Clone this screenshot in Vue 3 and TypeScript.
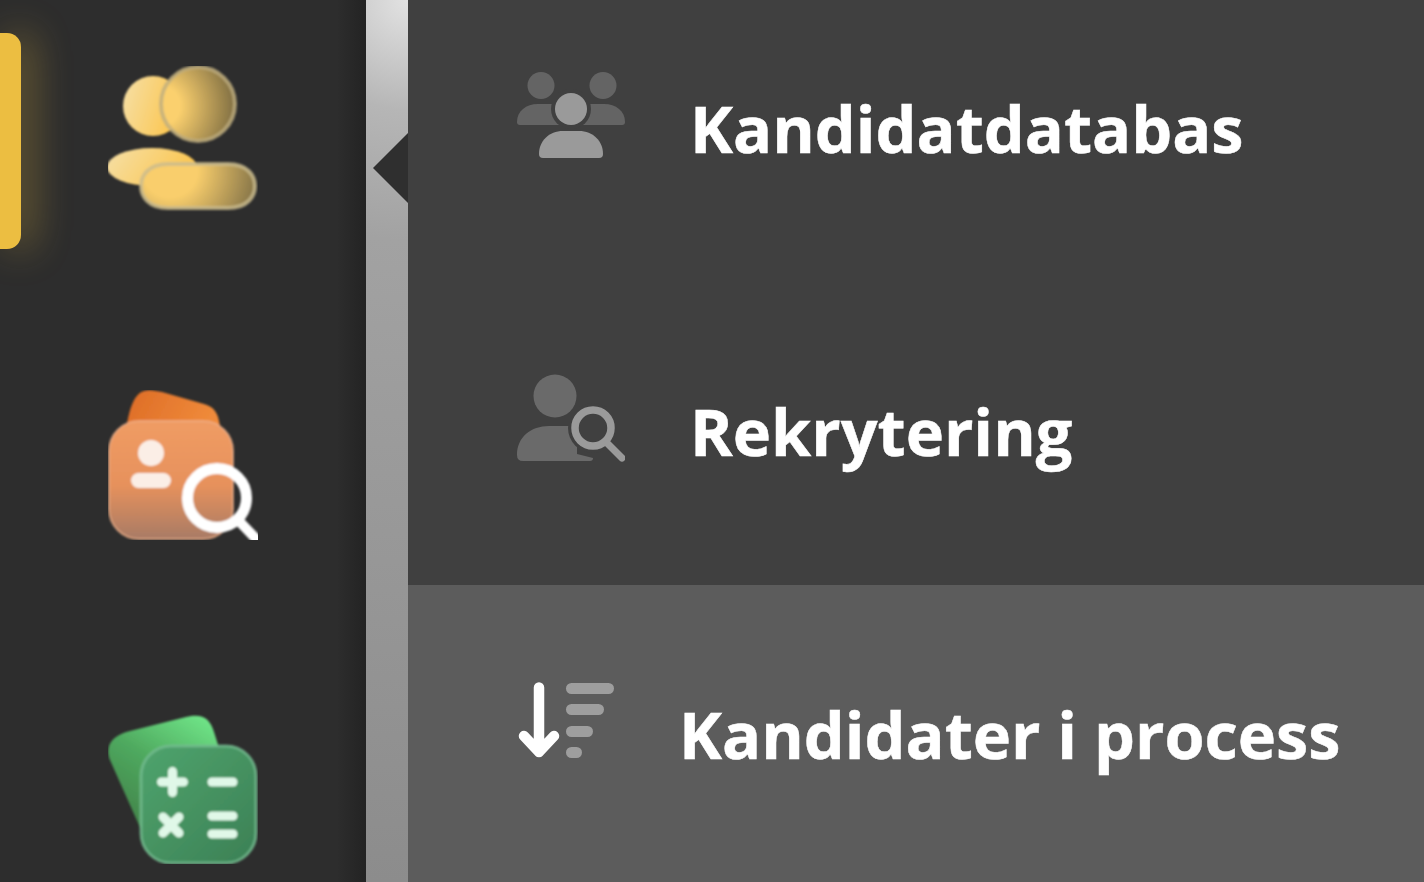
<template>
  <div class="shell">
    <aside class="rail">
      <span class="rail__marker"></span>

      <svg class="rail__icon" width="150" height="150" viewBox="0 0 150 150">
        <defs>
          <linearGradient id="coinBack" x1="0" y1="0" x2="1" y2="0.3">
            <stop offset="0" stop-color="#f6e0a8" />
            <stop offset="1" stop-color="#fbc650" />
          </linearGradient>
          <radialGradient id="coinFront" gradientUnits="userSpaceOnUse" cx="52" cy="40" r="80">
            <stop offset="0.25" stop-color="#fbd06e" />
            <stop offset="1" stop-color="#75663f" />
          </radialGradient>
          <radialGradient id="bodyFront" gradientUnits="userSpaceOnUse" cx="62" cy="104" r="92">
            <stop offset="0.3" stop-color="#f9ce6c" />
            <stop offset="1" stop-color="#7d6e46" />
          </radialGradient>
          <filter id="soft"><feGaussianBlur stdDeviation="1.2" /></filter>
        </defs>
        <g filter="url(#soft)">
          <circle cx="45" cy="40" r="30" fill="url(#coinBack)" />
          <ellipse cx="44" cy="101" rx="45" ry="19" fill="url(#coinBack)" />
          <circle cx="90" cy="38" r="37" fill="url(#coinFront)" stroke="#bfae7e" stroke-opacity="0.8" stroke-width="4" />
          <path d="M60 98 H120 C140 98 147 110 147 120 C147 130 140 142 120 142 H60 C40 142 33 130 33 120 C33 110 40 98 60 98 Z" fill="url(#bodyFront)" stroke="#cbbb8d" stroke-opacity="0.8" stroke-width="4" />
        </g>
      </svg>

      <svg class="rail__icon" width="150" height="150" viewBox="0 0 150 150">
        <defs>
          <linearGradient id="cardBack" x1="0" y1="0" x2="1" y2="0.2">
            <stop offset="0" stop-color="#dd6c26" />
            <stop offset="1" stop-color="#ef8a3a" />
          </linearGradient>
          <linearGradient id="cardFront" x1="0" y1="0" x2="0" y2="1">
            <stop offset="0" stop-color="#f09c64" />
            <stop offset="0.55" stop-color="#e6915c" />
            <stop offset="1" stop-color="#a87b66" />
          </linearGradient>
        </defs>
        <g filter="url(#soft)">
          <path d="M19 34 C22 18 26 4 36 1 C42 -1 48 1 54 2 L96 14 C106 17 110 22 112 36 Z" fill="url(#cardBack)" />
          <rect x="1" y="31" width="124" height="118" rx="30" fill="url(#cardFront)" stroke="#f0b08a" stroke-opacity="0.7" stroke-width="2" />
          <circle cx="43" cy="63" r="13" fill="#fbeee6" />
          <rect x="23" y="83" width="40" height="15" rx="7.500" fill="#fbeee6" />
          <circle cx="109" cy="108" r="29.500" fill="none" stroke="#fff" stroke-width="11" />
          <path d="M130 130 L150 151" stroke="#fff" stroke-width="10" stroke-linecap="round" />
        </g>
      </svg>

      <svg class="rail__icon" width="150" height="150" viewBox="0 0 150 150">
        <defs>
          <linearGradient id="calcBack" x1="0.8" y1="0" x2="0.2" y2="1">
            <stop offset="0" stop-color="#6fe487" />
            <stop offset="0.45" stop-color="#4fa95f" />
            <stop offset="1" stop-color="#3f7d46" />
          </linearGradient>
          <linearGradient id="calcFront" x1="0" y1="0" x2="1" y2="1">
            <stop offset="0" stop-color="#4fa46d" />
            <stop offset="1" stop-color="#3c8055" />
          </linearGradient>
        </defs>
        <g filter="url(#soft)">
          <path d="M22 17 L78 3 C94 -1 102 4 106 18 L116 50 L60 125 L34 118 L2 46 C-4 30 6 21 22 17 Z" fill="url(#calcBack)" />
          <rect x="33" y="32" width="115" height="117" rx="30" fill="url(#calcFront)" stroke="#73bb8f" stroke-opacity="0.8" stroke-width="3" />
          <g stroke="#e0f8e8" stroke-width="9" stroke-linecap="round" fill="none">
            <path d="M53.500 68 H75.500 M64.500 57.500 V78.500" />
            <path d="M104 68 H125" />
            <path d="M55 103 L71 119 M71 103 L55 119" />
            <path d="M104 102 H125 M104 120 H125" />
          </g>
        </g>
      </svg>
    </aside>

    <div class="divider">
      <span class="divider__notch"></span>
    </div>

    <nav class="panel">
      <a class="row">
        <svg class="row__icon" width="108" height="88" viewBox="0 0 108 88">
          <g fill="#646464">
            <circle cx="24" cy="14.500" r="13.500" />
            <circle cx="86" cy="14.500" r="13.500" />
            <path d="M0 51 C0 40 9 33 21 33 H43 V54 H3 Q0 54 0 51 Z" />
            <path d="M108 51 C108 40 99 33 87 33 H65 V54 H105 Q108 54 108 51 Z" />
          </g>
          <circle cx="54" cy="38" r="20" fill="#404040" />
          <circle cx="54" cy="38" r="16" fill="#9a9a9a" />
          <path d="M22 83 C22 70 32 60 46 60 H62 C76 60 86 70 86 83 Q86 87 82 87 H26 Q22 87 22 83 Z" fill="#9a9a9a" />
        </svg>
        <span class="row__label">Kandidatdatabas</span>
      </a>

      <a class="row">
        <svg class="row__icon" width="108" height="88" viewBox="0 0 108 88">
          <circle cx="38" cy="22" r="21.500" fill="#6a6a6a" />
          <path d="M0 81 C0 63 14 52 32 52 H60 V80 L76 84 Q76 87 73 87 H6 Q0 87 0 81 Z" fill="#6a6a6a" />
          <circle cx="76" cy="54" r="25" fill="#404040" />
          <circle cx="76" cy="54" r="18" fill="#404040" stroke="#9a9a9a" stroke-width="7.500" />
          <path d="M90 69 L105 84" stroke="#9a9a9a" stroke-width="7" stroke-linecap="round" />
        </svg>
        <span class="row__label">Rekrytering</span>
      </a>

      <a class="row row--active">
        <svg class="row__icon" width="108" height="88" viewBox="0 0 108 88">
          <path d="M22 10.500 V75 M7 59 L22 75 L37 59" fill="none" stroke="#fff" stroke-width="10.500" stroke-linecap="round" stroke-linejoin="round" />
          <g fill="#9e9e9e">
            <rect x="49" y="6" width="48" height="11" rx="5.500" />
            <rect x="49" y="27" width="38" height="11" rx="5.500" />
            <rect x="49" y="49" width="27" height="11" rx="5.500" />
            <rect x="49" y="70" width="16" height="11" rx="5.500" />
          </g>
        </svg>
        <span class="row__label">Kandidater i process</span>
      </a>
    </nav>
  </div>
</template>

<script setup lang="ts">
</script>

<style>
html,
body {
  margin: 0;
  background: #404040;
}
</style>

<style scoped>
.shell {
  display: flex;
  width: 1424px;
  height: 882px;
  overflow: hidden;
  font-family: "Open Sans", "Liberation Sans", sans-serif;
}

.rail {
  position: relative;
  flex: 0 0 366px;
  box-sizing: border-box;
  padding: 66px 0 0 108px;
  display: flex;
  flex-direction: column;
  gap: 174px;
  background: linear-gradient(90deg, #2d2d2d 0, #2d2d2d 92%, #232323 100%);
}

.rail__marker {
  position: absolute;
  left: 0;
  top: 33px;
  width: 21px;
  height: 216px;
  background: #ecbe41;
  border-radius: 0 14px 14px 0;
  box-shadow: 10px 0 38px rgba(236, 190, 65, 0.42);
}

.rail__icon {
  display: block;
  flex: none;
}

.divider {
  position: relative;
  flex: 0 0 42px;
  background: radial-gradient(circle at 100% 0, #e2e2e2 0, #b6b6b6 110px, #a2a2a2 240px, #8c8c8c 882px);
}

.divider__notch {
  position: absolute;
  right: 0;
  top: 133px;
  width: 0;
  height: 0;
  border-style: solid;
  border-width: 35px 35px 35px 0;
  border-color: transparent #2f2f2f transparent transparent;
}

.panel {
  flex: 1;
  margin-top: -21px;
  display: grid;
  grid-auto-rows: 303px;
  background: #404040;
}

.row {
  display: flex;
  align-items: center;
  gap: 65px;
  box-sizing: border-box;
  padding: 0 0 4px 109px;
  color: #fff;
}

.row--active {
  gap: 54px;
  background: #5c5c5c;
}

.row__icon {
  flex: none;
  margin-bottom: 28px;
}

.row__label {
  font-size: 64.8px;
  font-weight: 700;
  line-height: 1;
  white-space: nowrap;
  -webkit-text-stroke: 0.5px #fff;
}
</style>
